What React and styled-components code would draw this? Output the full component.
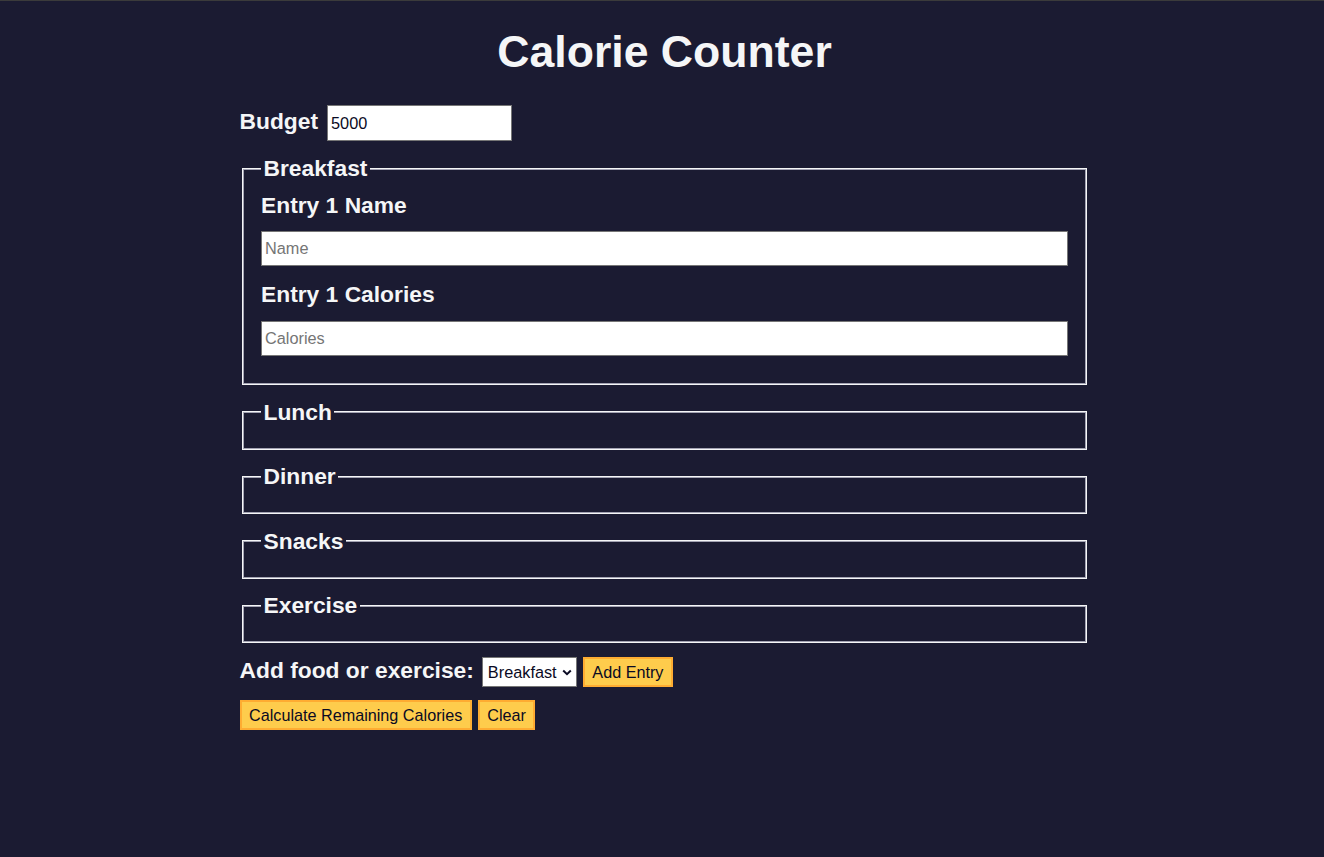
import React from 'react';
import styled, { createGlobalStyle } from 'styled-components';

const GlobalStyle = createGlobalStyle`
  html, body {
    margin: 0;
    padding: 0;
  }

  body {
    background-color: #1b1b32;
    color: #f5f6f7;
    font-family: "Liberation Sans", Arial, Helvetica, sans-serif;
    font-size: 22.8px;
    border-top: 1px solid #3b3b3b;
    min-height: 856px;
  }

  *, *::before, *::after {
    box-sizing: border-box;
  }
`;

const Page = styled.div`
  padding-left: 5px;
`;

const Title = styled.h1`
  margin: 25px 0 0;
  font-size: 44.6px;
  line-height: 52px;
  font-weight: bold;
  text-align: center;
`;

const Form = styled.form`
  width: 850px;
  margin: 0 auto;
`;

const Row = styled.div`
  display: flex;
  align-items: baseline;
  gap: ${props => props.gap || 6}px;
  margin-top: ${props => props.top || 0}px;
`;

const Label = styled.label`
  font-weight: bold;
  font-size: 22.8px;
  line-height: 26px;
`;

const TextInput = styled.input`
  display: block;
  width: ${props => (props.width ? `${props.width}px` : '100%')};
  height: ${props => props.height || 35}px;
  margin: 0;
  padding: 0 3px;
  border: 1px solid #767676;
  border-radius: 0;
  background: #fff;
  color: #0a0a23;
  font-family: "Liberation Sans", Arial, sans-serif;
  font-size: 16.3px;

  &::placeholder {
    color: #757575;
  }
`;

const Fieldset = styled.fieldset`
  margin: ${props => props.top || 0}px 2.5px 13.5px;
  padding: 11.5px 18px 12.5px;
  border: 1px solid #f5f6f7;
  box-shadow: inset 0 0 0 1px #a3a3b3;
  min-width: 0;
`;

const Legend = styled.legend`
  padding: 0 2.5px;
  font-weight: bold;
  font-size: 22.8px;
  line-height: 26px;
  background-color: #1b1b32;
`;

const InputContainer = styled.div`
  display: flex;
  flex-direction: column;

  ${Label} {
    margin-bottom: 12.5px;
    line-height: 24px;
    padding-bottom: 2px;
  }

  ${TextInput} {
    margin-bottom: 16px;
  }
`;

const SelectBox = styled.span`
  position: relative;
  display: inline-flex;
  margin-left: 2px;
`;

const Select = styled.select`
  appearance: none;
  -webkit-appearance: none;
  width: 95px;
  height: 30px;
  margin: 0;
  padding: 0 18px 0 5px;
  border: 1px solid #767676;
  border-radius: 0;
  background: #fff;
  color: #0a0a23;
  font-family: "Liberation Sans", Arial, sans-serif;
  font-size: 16.3px;
`;

const Chevron = styled.svg`
  position: absolute;
  right: 5px;
  top: 12px;
  width: 10px;
  height: 7px;
  pointer-events: none;
`;

const Button = styled.button`
  height: 30px;
  margin: 0;
  padding: 0 7.5px;
  cursor: pointer;
  background-color: #fecc4c;
  border: 2px solid #feac32;
  color: #0a0a23;
  font-family: "Liberation Sans", Arial, sans-serif;
  font-size: 16.2px;
`;

const meals = ['Breakfast', 'Lunch', 'Dinner', 'Snacks', 'Exercise'];

const Entry = ({ n }) => (
  <InputContainer>
    <Label htmlFor={`breakfast-${n}-name`}>Entry {n} Name</Label>
    <TextInput type="text" id={`breakfast-${n}-name`} placeholder="Name" />
    <Label htmlFor={`breakfast-${n}-calories`}>Entry {n} Calories</Label>
    <TextInput
      type="number"
      min="0"
      id={`breakfast-${n}-calories`}
      placeholder="Calories"
    />
  </InputContainer>
);

export default function App() {
  return (
    <Page>
      <GlobalStyle />
      <Title>Calorie Counter</Title>
      <Form onSubmit={e => e.preventDefault()}>
        <Row gap={9} top={27}>
          <Label htmlFor="budget">Budget</Label>
          <TextInput
            type="number"
            id="budget"
            width={185}
            height={36}
            defaultValue="5000"
          />
        </Row>

        {meals.map((meal, i) => (
          <Fieldset key={meal} top={i === 0 ? 14 : 0}>
            <Legend>{meal}</Legend>
            {i === 0 ? <Entry n={1} /> : <InputContainer />}
          </Fieldset>
        ))}

        <Row gap={6} top={13}>
          <Label htmlFor="entry-dropdown">Add food or exercise:</Label>
          <SelectBox>
            <Select id="entry-dropdown" defaultValue="breakfast">
              <option value="breakfast">Breakfast</option>
              <option value="lunch">Lunch</option>
              <option value="dinner">Dinner</option>
              <option value="snacks">Snacks</option>
              <option value="exercise">Exercise</option>
            </Select>
            <Chevron viewBox="0 0 10 7">
              <path
                d="M1.2 1.5 L5 5.2 L8.8 1.5"
                fill="none"
                stroke="#0a0a23"
                strokeWidth="2"
              />
            </Chevron>
          </SelectBox>
          <Button type="button">Add Entry</Button>
        </Row>

        <Row gap={6} top={13}>
          <Button type="submit">Calculate Remaining Calories</Button>
          <Button type="button">Clear</Button>
        </Row>
      </Form>
    </Page>
  );
}
